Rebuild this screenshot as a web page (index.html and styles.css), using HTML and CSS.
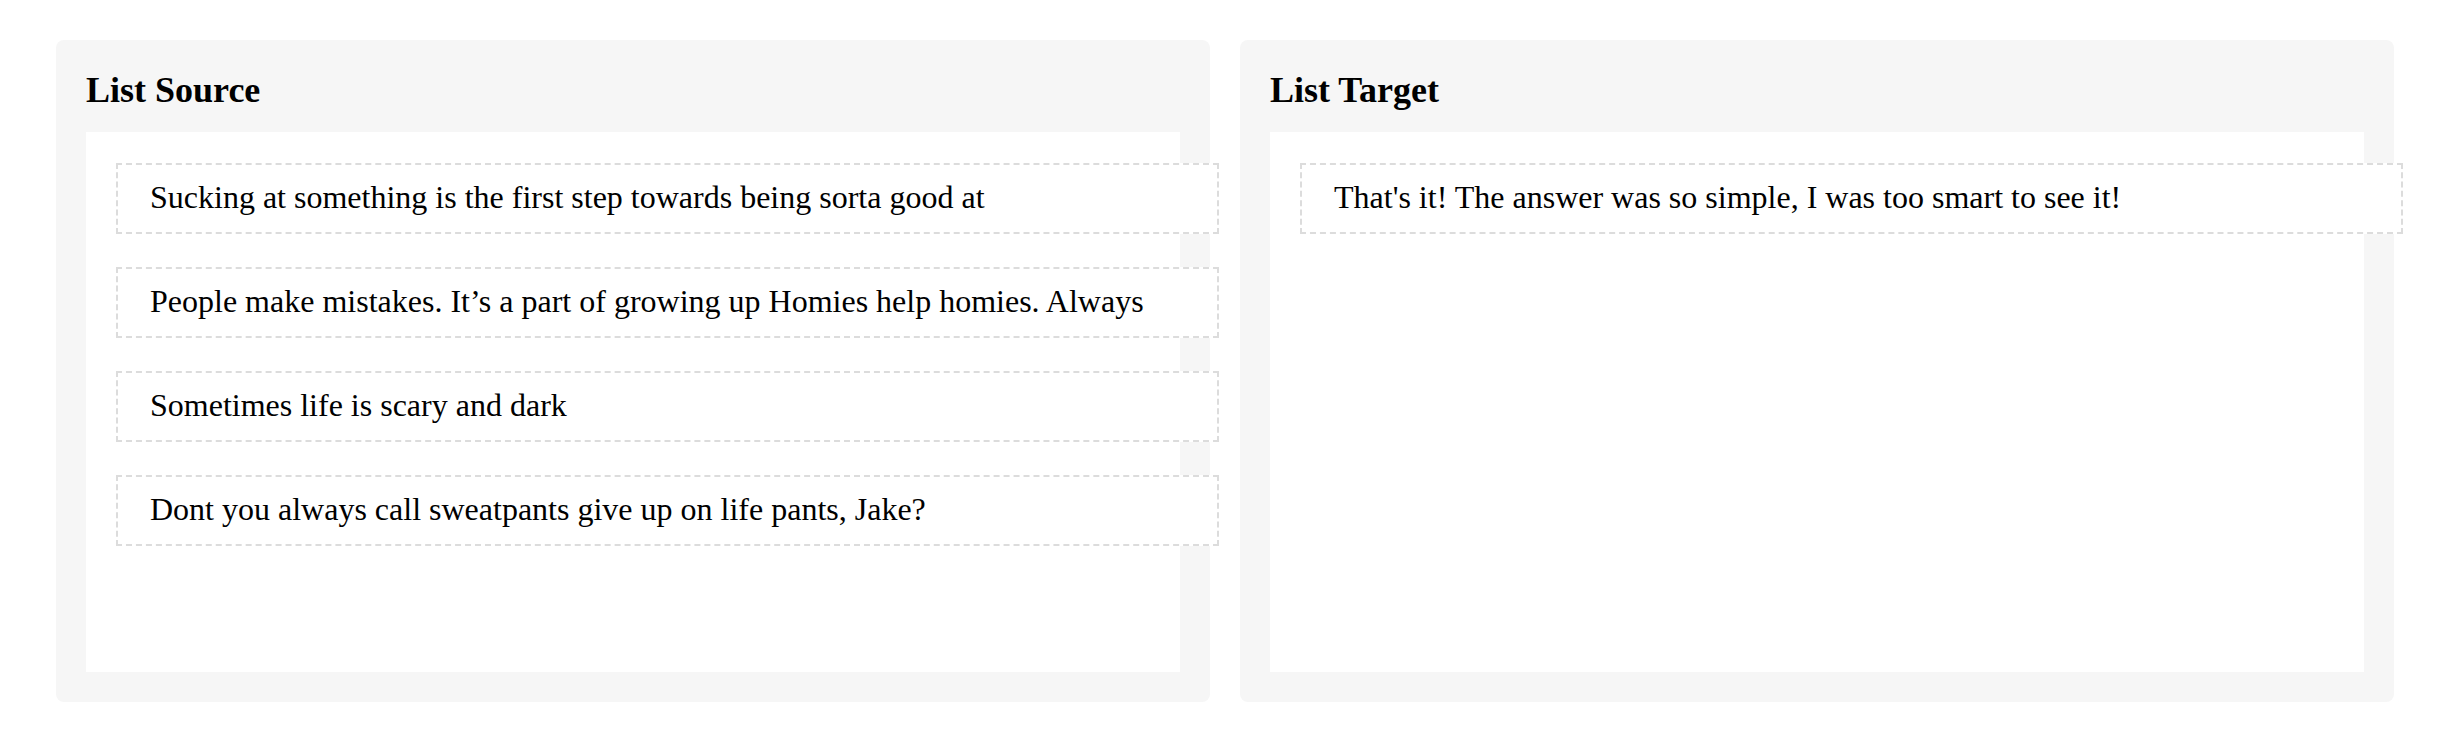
FILE: index.html
```html
<!DOCTYPE html>
<html lang="en">
<head>
<meta charset="utf-8">
<title>Lists</title>
<link rel="stylesheet" href="styles.css">
</head>
<body>
<div class="board">
  <section class="panel">
    <h3 class="panel-title">List Source</h3>
    <div class="list">
      <div class="item">Sucking at something is the first step towards being sorta good at</div>
      <div class="item">People make mistakes. It’s a part of growing up Homies help homies. Always</div>
      <div class="item">Sometimes life is scary and dark</div>
      <div class="item">Dont you always call sweatpants give up on life pants, Jake?</div>
    </div>
  </section>
  <section class="panel">
    <h3 class="panel-title">List Target</h3>
    <div class="list">
      <div class="item">That's it! The answer was so simple, I was too smart to see it!</div>
    </div>
  </section>
</div>
</body>
</html>
```
FILE: styles.css
```css
html, body {
  margin: 0;
  padding: 0;
  background: #ffffff;
  font-family: "Liberation Serif", "Times New Roman", serif;
  color: #000;
}

.board {
  display: flex;
  gap: 30px;
  padding: 40px 54px 0 56px;
}

.panel {
  flex: 1 1 0;
  min-width: 0;
  background: #f6f6f6;
  border-radius: 8px;
  padding: 29px 30px 30px;
}

.panel-title {
  margin: 0 0 21px;
  font-size: 36px;
  line-height: 42px;
  font-weight: bold;
}

.list {
  box-sizing: border-box;
  height: 540px;
  background: #ffffff;
  padding: 31px 31px 31px 30px;
}

.item {
  box-sizing: content-box;
  width: 100%;
  border: 2px dashed #dcdcdc;
  padding: 14px 34px 16px 32px;
  margin-bottom: 33px;
  font-size: 32px;
  line-height: 37px;
  white-space: nowrap;
  background: #ffffff;
}
```
